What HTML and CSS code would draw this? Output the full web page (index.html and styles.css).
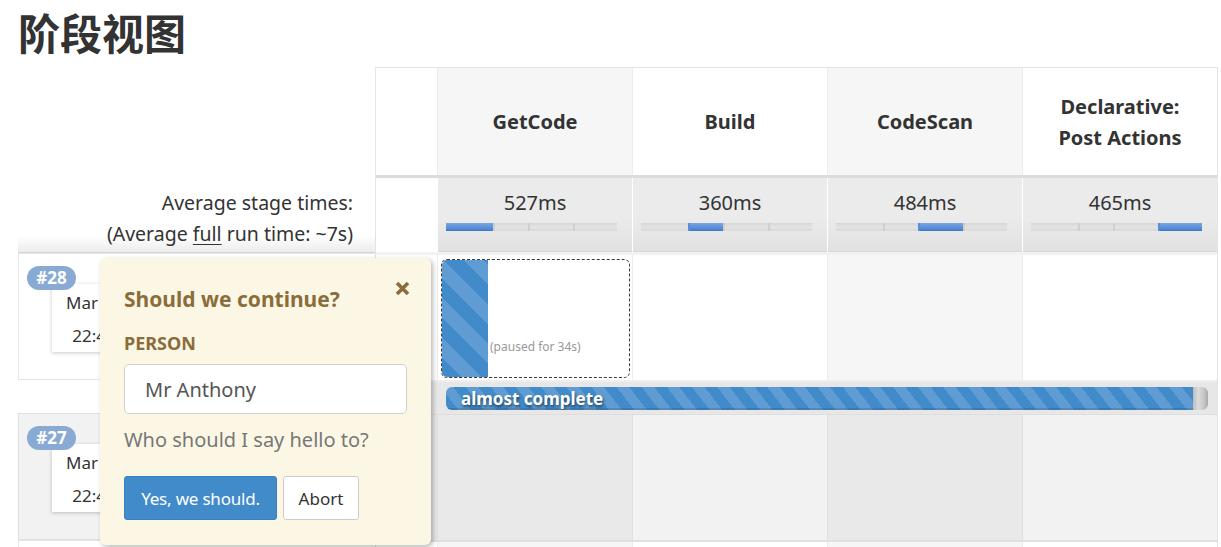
FILE: index.html
```html
<!DOCTYPE html>
<html lang="zh">
<head>
<meta charset="utf-8">
<title>阶段视图</title>
<link rel="stylesheet" href="styles.css">
</head>
<body>
<h1 class="title">阶段视图</h1>
<div class="view">
  <div class="left">
    <div class="left-head"></div>
    <div class="left-avg">Average stage times:<br>(Average <u>full</u> run time: ~7s)</div>
    <div class="build">
      <span class="badge">#28</span>
      <div class="start-box"><div>Mar 13</div><div>22:47</div></div>
    </div>
    <div class="left-gap"></div>
    <div class="build alt">
      <span class="badge">#27</span>
      <div class="start-box"><div>Mar 13</div><div>22:46</div></div>
    </div>
    <div class="build next"></div>
  </div>

  <div class="table">
    <div class="trow thead">
      <div class="cell blank"></div>
      <div class="cell shade"><span>GetCode</span></div>
      <div class="cell"><span>Build</span></div>
      <div class="cell shade"><span>CodeScan</span></div>
      <div class="cell"><span>Declarative:<br>Post Actions</span></div>
    </div>
    <div class="trow tavg">
      <div class="cell blank"></div>
      <div class="cell avg">527ms
        <div class="bar"><span class="seg on" style="flex:527"></span><span class="seg" style="flex:360"></span><span class="seg" style="flex:484"></span><span class="seg" style="flex:465"></span></div>
      </div>
      <div class="cell avg">360ms
        <div class="bar"><span class="seg" style="flex:527"></span><span class="seg on" style="flex:360"></span><span class="seg" style="flex:484"></span><span class="seg" style="flex:465"></span></div>
      </div>
      <div class="cell avg">484ms
        <div class="bar"><span class="seg" style="flex:527"></span><span class="seg" style="flex:360"></span><span class="seg on" style="flex:484"></span><span class="seg" style="flex:465"></span></div>
      </div>
      <div class="cell avg">465ms
        <div class="bar"><span class="seg" style="flex:527"></span><span class="seg" style="flex:360"></span><span class="seg" style="flex:484"></span><span class="seg on" style="flex:465"></span></div>
      </div>
    </div>
    <div class="trow tbuild">
      <div class="cell blank"></div>
      <div class="cell pad">
        <div class="paused">
          <div class="paused-fill"></div>
          <div class="paused-text">(paused for 34s)</div>
        </div>
      </div>
      <div class="cell"></div>
      <div class="cell shade"></div>
      <div class="cell"></div>
    </div>
    <div class="trow tprog">
      <div class="cell blank grey"></div>
      <div class="prog-cell">
        <div class="progress">
          <div class="progress-fill">almost complete</div>
          <div class="progress-rest"></div>
        </div>
      </div>
    </div>
    <div class="trow tbuild old">
      <div class="cell blank grey"></div>
      <div class="cell dark"></div>
      <div class="cell light"></div>
      <div class="cell dark"></div>
      <div class="cell light"></div>
    </div>
    <div class="trow tnext">
      <div class="cell blank"></div>
      <div class="cell shade"></div>
      <div class="cell"></div>
      <div class="cell shade"></div>
      <div class="cell"></div>
    </div>
  </div>

  <div class="popup">
    <button class="close" aria-label="close">
      <svg width="15" height="15" viewBox="0 0 15 15"><path d="M2 2 L13 13 M13 2 L2 13" stroke="#8a6d3b" stroke-width="3.6" fill="none"/></svg>
    </button>
    <div class="popup-title">Should we continue?</div>
    <div class="popup-label">PERSON</div>
    <div class="popup-input">Mr Anthony</div>
    <div class="popup-help">Who should I say hello to?</div>
    <div class="popup-buttons">
      <button class="btn primary">Yes, we should.</button>
      <button class="btn">Abort</button>
    </div>
  </div>
</div>
</body>
</html>
```

FILE: styles.css
```css
* { box-sizing: border-box; }

html, body { height: 547px; }

body {
  margin: 0;
  padding: 0 0 0 18px;
  font-family: "Noto Sans", "Open Sans", sans-serif;
  color: #333;
  background: #fff;
  overflow: hidden;
}

.title {
  margin: 0;
  padding-top: 4px;
  height: 67px;
  font-family: "Noto Sans CJK SC", "Noto Sans", sans-serif;
  font-weight: 700;
  font-size: 42px;
  line-height: 56px;
  color: #333;
}

.view {
  position: relative;
  display: flex;
  align-items: flex-start;
}

/* left column */
.left {
  width: 357px;
  flex: none;
}
.left-head { height: 111px; }
.left-avg {
  height: 75px;
  padding: 9px 22px 0 0;
  text-align: right;
  font-size: 19.5px;
  line-height: 31px;
  background: linear-gradient(#fff 78%, #ececec);
  border-bottom: 1px solid #d4d4d4;
}
.left-avg u { text-decoration-thickness: 1px; text-underline-offset: 3px; }

.build {
  position: relative;
  height: 127px;
  border: 1px solid #e6e6e6;
  border-right: none;
  background: #fff;
  display: flex;
  align-items: flex-start;
  padding: 30px 0 0 33px;
}
.build.alt { background: #f2f2f2; border-color: #e0e0e0; }
.build.next { height: 7px; border-bottom: none; }
.left-gap { height: 33px; }

.badge {
  position: absolute;
  left: 8px;
  top: 12px;
  z-index: 1;
  width: 49px;
  height: 24px;
  border-radius: 12px;
  background: #89aad2;
  color: #fff;
  font-weight: 700;
  font-size: 17px;
  line-height: 24px;
  text-align: center;
}
.start-box {
  width: 84px;
  height: 68px;
  background: #fff;
  box-shadow: 0 1px 4px rgba(0,0,0,0.22);
  text-align: center;
  font-size: 17px;
  line-height: 33px;
  padding-top: 2px;
}

/* stage table */
.table {
  width: 843px;
  flex: none;
  border: 1px solid #e4e4e4;
  border-bottom: none;
}
.trow {
  display: grid;
  grid-template-columns: 61px repeat(4, 194px);
  column-gap: 1px;
  background: #ececec;
}
.cell { background: #fff; }
.cell.shade { background: #f6f6f6; }

.thead { height: 107px; }
.thead .cell {
  display: flex;
  align-items: center;
  justify-content: center;
  text-align: center;
  font-weight: 700;
  font-size: 20px;
  line-height: 31px;
  color: #333;
}

.tavg {
  height: 80px;
  border-top: 3px solid #dcdcdc;
  border-bottom: 3px solid #f2f2f2;
  background: #fff;
}
.cell.avg {
  background: linear-gradient(#ebebeb 55%, #e1e1e1);
  text-align: center;
  font-size: 20px;
  line-height: 30px;
  padding-top: 10px;
  border-bottom: 1px solid #d8d8d8;
}
.bar {
  display: flex;
  width: 171px;
  height: 8px;
  margin: 5px 0 0 8px;
  background: #dcdcdc;
}
.seg {
  display: block;
  height: 8px;
  background: linear-gradient(#d6d6d6, #e3e3e3 50%, #d9d9d9);
  border-left: 2px solid #cfcfcf;
}
.seg:first-child { border-left: none; }
.seg.on {
  background: linear-gradient(#7aa5e2, #5a8fd8 60%, #3f78cc);
  border-left-color: #5a8fd8;
}

.tbuild { height: 125px; }
.cell.pad { padding: 4px 2px 2px 3px; }
.paused {
  height: 100%;
  border: 1px dashed #3a3a3a;
  border-radius: 6px;
  overflow: hidden;
  display: flex;
  align-items: flex-end;
  background: #fff;
}
.paused-fill {
  width: 46px;
  align-self: stretch;
  background: repeating-linear-gradient(45deg, #428bca 0 14px, #5e9cd3 14px 28px);
}
.paused-text {
  font-size: 12px;
  color: #999;
  padding: 0 0 22px 2px;
  white-space: nowrap;
}

.tprog {
  height: 35px;
  border-top: 2px solid #eeeeee;
  border-bottom: 1px solid #dedede;
  background: #e8e8e8;
}
.cell.grey { background: #e6e6e6; }
.prog-cell {
  grid-column: 2 / 6;
  background: #e7e7e7;
  padding: 5px 9px 4px 8px;
}
.progress {
  display: flex;
  height: 23px;
  border-radius: 6px;
  overflow: hidden;
}
.progress-fill {
  flex: 1;
  background: repeating-linear-gradient(52deg, #428bca 0 9.9px, #5e9cd3 9.9px 19.8px);
  box-shadow: inset 0 -2px 0 rgba(0,0,0,0.12);
  color: #fff;
  font-weight: 700;
  font-size: 17px;
  line-height: 23px;
  padding-left: 15px;
  text-shadow: 1px 2px 3px rgba(0,0,0,0.55);
  white-space: nowrap;
}
.progress-rest {
  width: 15px;
  background: linear-gradient(to right, #bdbdbd, #dcdcdc 35%, #c4c4c4 75%, #a9a9a9);
}

.old { background: #e0e0e0; }
.old .cell.dark { background: #e9e9e9; }
.old .cell.light { background: #f2f2f2; }
.tnext { height: 7px; border-top: 2px solid #e0e0e0; }

/* popup */
.popup {
  position: absolute;
  left: 82px;
  top: 191px;
  width: 331px;
  height: 287px;
  background: #fcf7e4;
  border-radius: 6px;
  box-shadow: 2px 2px 5px rgba(0,0,0,0.28);
  padding: 26px 24px 0 24px;
  color: #8a6d3b;
  z-index: 5;
}
.close {
  position: absolute;
  top: 23px;
  right: 21px;
  width: 15px;
  height: 15px;
  padding: 0;
  border: none;
  background: none;
  display: block;
}
.close svg { display: block; }
.popup-title {
  font-size: 21px;
  font-weight: 700;
  line-height: 30px;
}
.popup-label {
  margin-top: 16px;
  font-size: 18px;
  font-weight: 700;
  line-height: 26px;
}
.popup-input {
  margin-top: 8px;
  height: 50px;
  width: 283px;
  background: #fff;
  border: 1px solid #cfcfcf;
  border-radius: 5px;
  padding: 2px 0 0 20px;
  font-size: 20px;
  line-height: 46px;
  color: #555;
}
.popup-help {
  margin-top: 12px;
  font-size: 20px;
  line-height: 28px;
  color: #777;
}
.popup-buttons {
  margin-top: 22px;
  display: flex;
  gap: 6px;
}
.btn {
  height: 44px;
  padding: 0;
  font-family: inherit;
  font-size: 17px;
  color: #333;
  background: #fff;
  border: 1px solid #ccc;
  border-radius: 3px;
  white-space: nowrap;
}
.btn.primary {
  width: 153px;
  background: #428bca;
  border-color: #3b7fbd;
  color: #fff;
  letter-spacing: -0.2px;
}
.btn:not(.primary) { width: 76px; }
```
